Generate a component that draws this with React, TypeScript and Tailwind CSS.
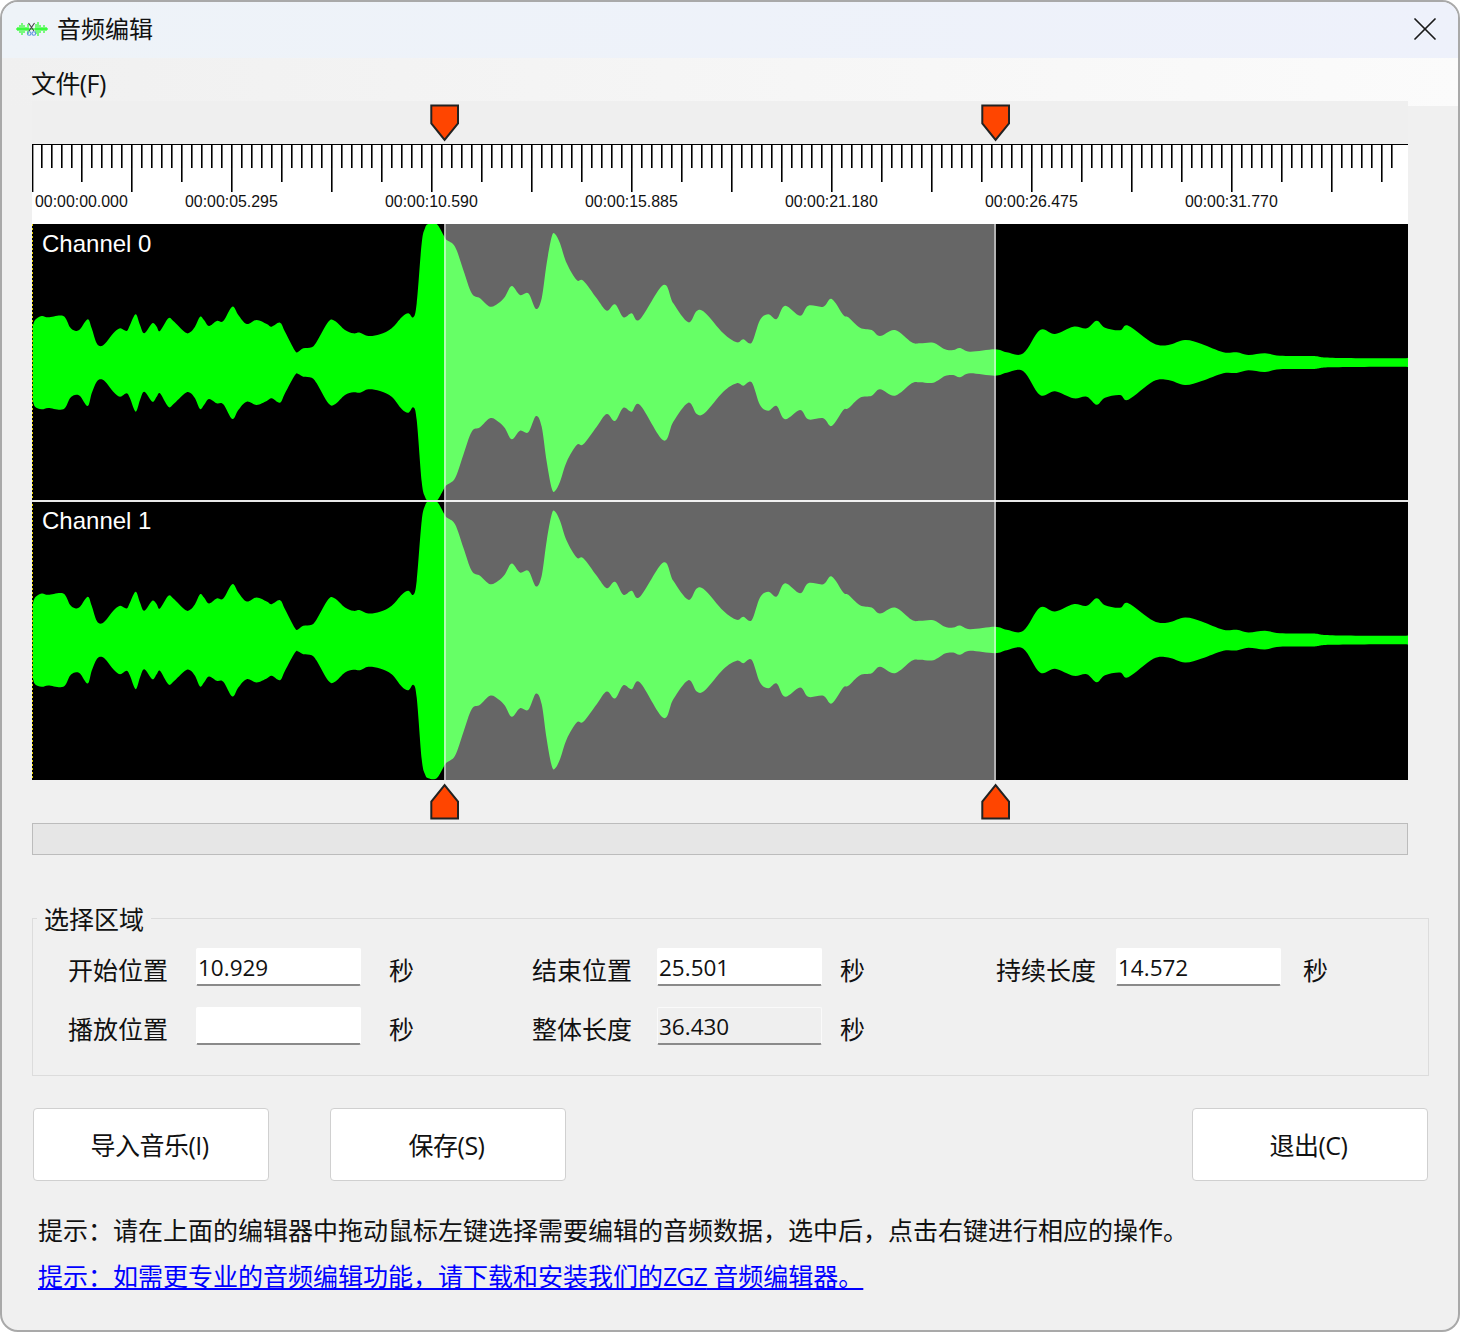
import { X } from 'lucide-react';

const cjk = "font-['Open_Sans','Noto_Sans_CJK_SC',sans-serif]";

// envelope traced from the waveform, [x, top, bottom] in px of the channel (0 = top of channel 0)
const left: number[][] = [
  [98,320,540],[105,300,560],[125,288,568],[145,292,564],[190,288,568],[210,322,535],[225,332,525],[240,328,528],[263,298,558],[275,325,520],[290,370,485],[305,378,478],[320,365,490],[340,340,515],[360,325,530],[380,333,520],[390,315,535],[407,283,575],[420,315,540],[433,340,515],[457,310,545],[470,320,530],[480,333,520],[505,295,560],[520,303,553],[555,337,520],[570,337,518],[585,320,535],[600,290,567],[612,300,555],[627,318,537],[650,303,550],[670,303,553],[697,260,597],[715,285,570],[740,312,545],[770,300,555],[800,312,543],[815,320,535],[840,308,548],[855,335,520],[885,392,465],[895,395,462],[910,385,470],[935,382,473],[950,365,490],[985,305,550],[1005,303,553],[1035,330,525],[1060,340,517],[1080,338,518],[1105,348,508],[1140,343,513],[1175,325,530],[1205,292,567],[1225,280,578],[1240,292,562],[1250,250,600],[1265,70,785],[1275,25,830],[1285,12,842],[1310,12,842],[1332,48,806],
];
const mid: number[][] = [
  [50,60,795],[75,80,775],[100,150,705],[125,220,635],[150,235,622],[180,260,595],[205,250,605],[225,230,625],[245,198,658],[270,225,632],[295,220,637],[318,267,588],[335,235,620],[350,130,725],[365,50,805],[375,42,813],[390,70,785],[410,130,725],[440,180,675],[460,182,673],[500,235,620],[530,272,582],[555,253,603],[580,292,563],[605,280,575],[630,298,555],[700,195,661],[730,250,605],[775,307,548],[800,273,582],[825,278,578],[880,340,515],[920,367,490],[940,358,497],[965,368,487],[990,300,555],[1015,283,572],[1040,297,558],[1065,257,598],[1110,287,570],[1135,257,598],[1180,260,595],[1205,237,618],[1240,285,570],[1255,292,565],[1290,323,533],[1325,330,527],[1350,348,508],[1395,330,527],[1445,367,490],
];
const right: number[][] = [
  [0,370,487],[40,368,488],[75,388,468],[100,390,465],[120,384,472],[150,395,460],[225,388,467],[260,397,458],[310,400,454],[360,330,525],[405,342,514],[460,320,535],[500,325,530],[530,302,554],[555,323,533],[600,331,525],[625,317,539],[700,370,484],[745,375,480],[795,360,495],[845,372,483],[910,397,460],[950,397,459],[985,405,451],[1035,400,456],[1080,407,448],[1180,408,447],[1230,413,442],[1440,415,440],[1464,412,443],
];

// all three crops start at y=220, 3x zoom; shift to canvas coords (canvas starts at x=32, y=224)
const envelope = [
  ...left.map(([x, t, b]) => [x / 3, t / 3, b / 3]),
  ...mid.map(([x, t, b]) => [430 + x / 3, t / 3, b / 3]),
  ...right.map(([x, t, b]) => [920 + x / 3, t / 3, b / 3]),
].map(([x, t, b]) => [x - 32, t - 4, b - 4]);

function smooth(pts: number[][]) {
  let d = `L${pts[0][0].toFixed(1)} ${pts[0][1].toFixed(1)}`;
  for (let i = 0; i < pts.length - 1; i++) {
    const p0 = pts[Math.max(i - 1, 0)];
    const p1 = pts[i];
    const p2 = pts[i + 1];
    const p3 = pts[Math.min(i + 2, pts.length - 1)];
    const c1x = p1[0] + (p2[0] - p0[0]) / 6;
    const c1y = p1[1] + (p2[1] - p0[1]) / 6;
    const c2x = p2[0] - (p3[0] - p1[0]) / 6;
    const c2y = p2[1] - (p3[1] - p1[1]) / 6;
    d += `C${c1x.toFixed(1)} ${c1y.toFixed(1)} ${c2x.toFixed(1)} ${c2y.toFixed(1)} ${p2[0].toFixed(1)} ${p2[1].toFixed(1)}`;
  }
  return d;
}

const top = envelope.map(([x, t]) => [x, t]);
const bottom = envelope.map(([x, , b]) => [x, b]).reverse();
const wavePath = 'M' + smooth(top).slice(1) + smooth(bottom) + 'Z';

const ticks = Array.from({ length: 137 }, (_, i) => i);
const labels = [
  { text: '00:00:00.000', x: 3 },
  { text: '00:00:05.295', x: 153 },
  { text: '00:00:10.590', x: 353 },
  { text: '00:00:15.885', x: 553 },
  { text: '00:00:21.180', x: 753 },
  { text: '00:00:26.475', x: 953 },
  { text: '00:00:31.770', x: 1153 },
];

function Marker({ flip, x, y }: { flip?: boolean; x: number; y: number }) {
  return (
    <svg width="30" height="38" viewBox="0 0 30 38" className="absolute" style={{ left: x, top: y }}>
      <path
        d={flip ? 'M1.3 35.5V18.5L14.6 2L28 18.5V35.5Z' : 'M1.3 1.5H28V19.5L14.6 36L1.3 19.5Z'}
        fill="#ff4500"
        stroke="#222"
        strokeWidth="2"
      />
    </svg>
  );
}

function AppIcon() {
  return (
    <svg width="32" height="18" viewBox="0 0 32 18">
      <path
        d="M0 9H32M2 7V11M4 5V13M6 3V15M8 5V13M10 7V11M12 4V14M20 4V14M22 2V16M24 5V13M26 7V11M28 5V13M30 7V11"
        stroke="#00ff00"
        strokeWidth="1"
      />
      <path d="M12.5 3L18 11M18.5 3L13 11" stroke="#444" strokeWidth="1.1" />
      <circle cx="13.2" cy="13.5" r="1.8" fill="none" stroke="#5b93dc" strokeWidth="1.1" />
      <circle cx="17.8" cy="13.5" r="1.8" fill="none" stroke="#5b93dc" strokeWidth="1.1" />
    </svg>
  );
}

function Field({ label, value, labelW, gap, readOnly }: { label: string; value: string; labelW: string; gap: string; readOnly?: boolean }) {
  return (
    <div className="flex items-center">
      <span className={`${labelW} text-[25px] leading-[38px] text-[#111] pt-[6px]`}>{label}</span>
      <div
        className={`w-[165px] h-[38px] border-b-2 border-b-[#8a8a8a] border-t border-x rounded-[2px] pl-[1px] text-[22.5px] leading-[37px] text-[#111] ${readOnly ? 'bg-[#efefef] border-[#fafafa]' : 'bg-white border-white'}`}
      >
        {value}
      </div>
      <span className={`${gap} text-[25px] leading-[38px] text-[#111] pt-[6px]`}>秒</span>
    </div>
  );
}

function Button({ children }: { children: string }) {
  return (
    <button className="w-[236px] h-[73px] bg-white border border-[#d0d0d0] rounded-[4px] text-[25px] text-[#111] tracking-[-0.5px] pt-[2px] pr-[3px]">
      {children}
    </button>
  );
}

export default function App() {
  return (
    <div className="w-[1460px] h-[1332px] bg-white">
      <div className={`${cjk} relative w-full h-full rounded-[18px] border-2 border-[#a9a9a9] bg-[#f0f0f0] overflow-hidden flex flex-col`}>
        {/* title bar */}
        <div className="h-[56px] shrink-0 flex items-center bg-gradient-to-r from-[#eef3f8] to-[#eef1fb] pl-[14px] pr-[13px] pb-[2px]">
          <AppIcon />
          <span className="ml-[9px] text-[24px] text-[#111]">音频编辑</span>
          <X className="ml-auto text-[#1a1a1a]" size={40} strokeWidth={1.05} />
        </div>

        {/* menu */}
        <div className="h-[48px] shrink-0 flex items-center bg-gradient-to-r from-[#f0f0f0] to-[#fbfbfb] pl-[29px] pt-[4px]">
          <span className="text-[25px] tracking-[-0.6px] text-[#111]">文件(F)</span>
        </div>

        {/* editor */}
        <div className="relative -mt-[5px] ml-[30px] w-[1376px] shrink-0">
          <div className="relative h-[43px] bg-[#efefef]">
            <Marker x={398} y={3} />
            <Marker x={949} y={3} />
          </div>

          <div className="relative h-[80px] bg-white border-t border-black">
            <svg width="1376" height="48" viewBox="0 0 1376 48" className="block">
              {ticks.map((i) => {
                const x = i === 0 ? 0.6 : i * 10 - 0.2;
                const h = i % 10 === 0 ? 47 : i % 5 === 0 ? 37 : 23;
                return <path key={i} d={`M${x} 0V${h}`} stroke="#000" strokeWidth="1.6" />;
              })}
            </svg>
            {labels.map((l) => (
              <span key={l.text} className="absolute top-[47px] font-['Liberation_Sans',sans-serif] text-[15.9px] leading-[20px] text-[#111]" style={{ left: l.x }}>
                {l.text}
              </span>
            ))}
          </div>

          <div className="relative h-[556px] bg-black overflow-hidden">
            <svg width="1376" height="556" viewBox="0 0 1376 556" className="block">
              <defs>
                <clipPath id="ch0"><rect x="0" y="0" width="1376" height="276" /></clipPath>
                <clipPath id="ch1"><rect x="0" y="278" width="1376" height="278" /></clipPath>
              </defs>
              <g clipPath="url(#ch0)"><path d={wavePath} fill="#00ff00" /></g>
              <g clipPath="url(#ch1)"><path d={wavePath} transform="translate(0 277.5)" fill="#00ff00" /></g>
              <path d="M0.5 0V556" stroke="#e6d000" strokeWidth="1" strokeDasharray="2 2" />
            </svg>
            <div className="absolute left-0 right-0 top-[276px] h-[2px] bg-[#e8e8e8]" />
            <div className="absolute left-[412px] w-[552px] top-0 bottom-0 bg-white/40 border-x-2 border-white/50" />
            <span className="absolute left-[10px] top-[4px] font-['Liberation_Sans',sans-serif] text-[24px] leading-[32px] text-white">Channel 0</span>
            <span className="absolute left-[10px] top-[281px] font-['Liberation_Sans',sans-serif] text-[24px] leading-[32px] text-white">Channel 1</span>
          </div>

          <div className="relative h-[43px]">
            <Marker flip x={398} y={3} />
            <Marker flip x={949} y={3} />
          </div>

          <div className="h-[32px] bg-[#e6e6e6] border border-[#bcbcbc]" />
        </div>

        {/* selection group */}
        <fieldset className="mt-[44px] ml-[30px] w-[1397px] h-[177px] shrink-0 border border-[#dcdcdc] pl-[35px]">
          <legend className="-ml-[31px] px-[7px] pt-[2px] text-[25px] leading-[36px] text-[#111]">选择区域</legend>
          <div className="grid grid-cols-[464px_464px_400px] gap-y-[15px] mt-[8px]">
            <Field label="开始位置" value="10.929" labelW="w-[128px]" gap="ml-[28px]" />
            <Field label="结束位置" value="25.501" labelW="w-[125px]" gap="ml-[18px]" />
            <Field label="持续长度" value="14.572" labelW="w-[120px]" gap="ml-[22px]" />
            <Field label="播放位置" value="" labelW="w-[128px]" gap="ml-[28px]" />
            <Field label="整体长度" value="36.430" labelW="w-[125px]" gap="ml-[18px]" readOnly />
          </div>
        </fieldset>

        {/* buttons */}
        <div className="mt-[32px] ml-[31px] w-[1395px] flex gap-[61px] shrink-0">
          <Button>导入音乐(I)</Button>
          <Button>保存(S)</Button>
          <div className="ml-auto"><Button>退出(C)</Button></div>
        </div>

        <p className="mt-[29px] ml-[36px] text-[25px] leading-[40px] text-[#111] whitespace-nowrap">
          提示：请在上面的编辑器中拖动鼠标左键选择需要编辑的音频数据，选中后，点击右键进行相应的操作。
        </p>
        <a className="mt-[6px] ml-[36px] text-[25px] leading-[40px] text-[#0000ff] underline whitespace-nowrap w-fit">
          提示：如需更专业的音频编辑功能，请下载和安装我们的<span className="tracking-[-1px]">ZGZ</span> 音频编辑器。
        </a>
      </div>
    </div>
  );
}
